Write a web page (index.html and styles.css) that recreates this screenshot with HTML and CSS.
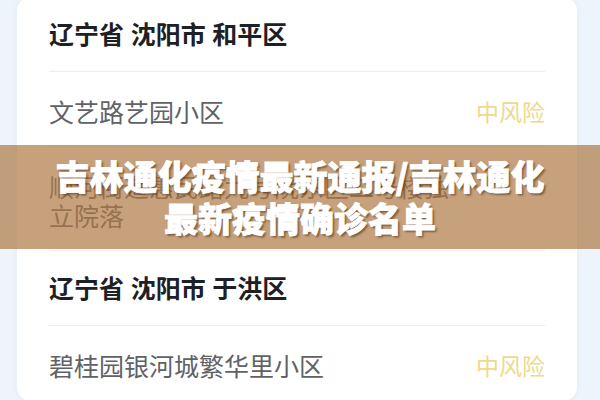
FILE: index.html
```html
<!DOCTYPE html>
<html lang="zh-CN">
<head>
<meta charset="utf-8">
<title>吉林通化疫情最新通报</title>
<link rel="stylesheet" href="styles.css">
</head>
<body>
  <div class="page">
    <div class="card">
      <div class="row head">辽宁省 沈阳市 和平区</div>
      <div class="row item">
        <span class="name">文艺路艺园小区</span>
        <span class="risk">中风险</span>
      </div>
      <div class="row item">
        <span class="name">顺河街道惠民路九号院东区二号楼独立院落</span>
      </div>
      <div class="row head">辽宁省 沈阳市 于洪区</div>
      <div class="row item">
        <span class="name">碧桂园银河城繁华里小区</span>
        <span class="risk">中风险</span>
      </div>
    </div>
    <div class="banner">
      <h1 class="banner-title">吉林通化疫情最新通报/吉林通化最新疫情确诊名单</h1>
    </div>
  </div>
</body>
</html>
```

FILE: styles.css
```css
html, body {
  margin: 0;
  padding: 0;
}

body {
  width: 600px;
  height: 400px;
  overflow: hidden;
  background: #eef4fb;
  font-family: "Noto Sans CJK SC", "Noto Sans", sans-serif;
}

.page {
  position: relative;
  height: 400px;
}

.card {
  width: 560px;
  margin: -3px 0 0 17px;
  padding: 0 32px;
  box-sizing: border-box;
  background: #ffffff;
  border-radius: 14px;
  box-shadow: 0 0 6px rgba(40, 60, 90, 0.05);
}

.row {
  display: flex;
  align-items: center;
  justify-content: space-between;
  border-bottom: 1px solid #ececec;
  font-size: 25px;
  line-height: 29px;
}

.head {
  height: 75px;
  box-sizing: border-box;
  padding-top: 22px;
  align-items: flex-start;
  font-weight: 700;
  color: #1d2024;
  word-spacing: 1px;
}

.item {
  padding: 25px 0 20px;
  color: #606266;
}

.name {
  max-width: 410px;
}

.risk {
  align-self: flex-start;
  font-size: 23px;
  color: #efd98c;
  white-space: nowrap;
}

/* tinted strip laid over the list */
.banner {
  position: absolute;
  left: 0;
  right: 0;
  top: 148px;
  height: 104px;
  display: flex;
  align-items: center;
  justify-content: center;
  background: rgba(174, 121, 68, 0.7);
}

.banner-title {
  margin: 0;
  max-width: 500px;
  text-align: center;
  font-size: 34px;
  line-height: 42.5px;
  font-weight: 900;
  color: #ffffff;
  -webkit-text-stroke: 0.8px #ffffff;
  text-shadow: 2px 2px 2px rgba(70, 40, 15, 0.55);
}
```
